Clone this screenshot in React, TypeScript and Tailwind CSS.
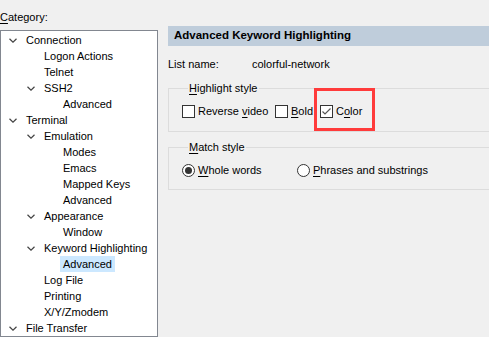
import React from "react";

const font = { fontFamily: '"Liberation Sans", Arial, sans-serif' };

function Chevron() {
  return (
    <svg width="8" height="5" viewBox="0 0 8 5" className="shrink-0">
      <polyline points="0.5,0.8 4,4.2 7.5,0.8" fill="none" stroke="#444" strokeWidth="1.2" />
    </svg>
  );
}

type Item = { label: string; level: number; open?: boolean; selected?: boolean };

const items: Item[] = [
  { label: "Connection", level: 0, open: true },
  { label: "Logon Actions", level: 1 },
  { label: "Telnet", level: 1 },
  { label: "SSH2", level: 1, open: true },
  { label: "Advanced", level: 2 },
  { label: "Terminal", level: 0, open: true },
  { label: "Emulation", level: 1, open: true },
  { label: "Modes", level: 2 },
  { label: "Emacs", level: 2 },
  { label: "Mapped Keys", level: 2 },
  { label: "Advanced", level: 2 },
  { label: "Appearance", level: 1, open: true },
  { label: "Window", level: 2 },
  { label: "Keyword Highlighting", level: 1, open: true },
  { label: "Advanced", level: 2, selected: true },
  { label: "Log File", level: 1 },
  { label: "Printing", level: 1 },
  { label: "X/Y/Zmodem", level: 1 },
  { label: "File Transfer", level: 0, open: true },
];

const pads = ["pl-[8px]", "pl-[26px]", "pl-[45px]"];

function TreeRow({ item }: { item: Item }) {
  return (
    <div className={`flex h-4 items-center whitespace-nowrap ${pads[item.level]}`}>
      <div className="flex w-[14px] shrink-0 items-center">{item.open ? <Chevron /> : null}</div>
      <span className={`px-[3px] leading-4 ${item.selected ? "bg-[#cce8ff]" : ""}`}>
        {item.label}
      </span>
    </div>
  );
}

function Checkbox({ checked }: { checked?: boolean }) {
  return (
    <span className="flex h-[13px] w-[13px] shrink-0 items-center justify-center border border-[#333] bg-white">
      {checked ? (
        <svg width="11" height="11" viewBox="0 0 11 11">
          <polyline points="1.5,5.5 4,8 9.5,2.5" fill="none" stroke="#555" strokeWidth="1.2" />
        </svg>
      ) : null}
    </span>
  );
}

function Radio({ checked }: { checked?: boolean }) {
  return (
    <span className="flex h-[13px] w-[13px] shrink-0 items-center justify-center rounded-full border border-[#333] bg-white">
      {checked ? <span className="h-[7px] w-[7px] rounded-full bg-[#333]" /> : null}
    </span>
  );
}

export default function App() {
  return (
    <div
      className="flex h-[337px] w-[489px] overflow-hidden whitespace-nowrap bg-[#f0f0f0] text-[11px] text-black"
      style={font}
    >
      <div className="flex w-[158px] shrink-0 flex-col pt-[9px]">
        <div className="h-4 leading-4">
          <span className="underline underline-offset-2">C</span>ategory:
        </div>
        <div className="mt-[5px] flex-1 border border-[#828790] bg-white pt-[1px]">
          {items.map((it, i) => (
            <TreeRow key={i} item={it} />
          ))}
        </div>
      </div>

      <div className="ml-[10px] flex w-[340px] shrink-0 flex-col pt-[26px]">
        <div className="flex h-5 items-center bg-[#bfcddb] pl-[6px] text-[11.5px] font-bold">
          Advanced Keyword Highlighting
        </div>
        <div className="mt-[10px] flex h-4 items-center leading-4">
          <span className="w-[84px]">List name:</span>
          <span>colorful-network</span>
        </div>

        <fieldset className="mt-[8px] h-[52px] border border-[#dcdcdc] px-[13px]">
          <legend className="ml-[6px] px-[1px] leading-4">
            <span className="underline underline-offset-2">H</span>ighlight style
          </legend>
          <div className="mt-[9px] flex h-[13px] items-center">
            <div className="flex w-[93px] items-center gap-[3px]">
              <Checkbox />
              <span>
                Reverse <span className="underline underline-offset-2">v</span>ideo
              </span>
            </div>
            <div className="flex w-[45px] items-center gap-[3px]">
              <Checkbox />
              <span>
                <span className="underline underline-offset-2">B</span>old
              </span>
            </div>
            <div className="relative flex items-center gap-[3px]">
              <Checkbox checked />
              <span>
                C<span className="underline underline-offset-2">o</span>lor
              </span>
              <span className="pointer-events-none absolute left-[-6px] top-[-15px] h-[43px] w-[61px] border-[3px] border-[#ff3b3b]" />
            </div>
          </div>
        </fieldset>

        <fieldset className="mt-[7px] h-[51px] border border-[#dcdcdc] px-[13px]">
          <legend className="ml-[6px] px-[1px] leading-4">
            <span className="underline underline-offset-2">M</span>atch style
          </legend>
          <div className="mt-[9px] flex h-[13px] items-center">
            <div className="flex w-[115px] items-center gap-[3px]">
              <Radio checked />
              <span>
                <span className="underline underline-offset-2">W</span>hole words
              </span>
            </div>
            <div className="flex items-center gap-[3px]">
              <Radio />
              <span>
                <span className="underline underline-offset-2">P</span>hrases and substrings
              </span>
            </div>
          </div>
        </fieldset>
      </div>
    </div>
  );
}
